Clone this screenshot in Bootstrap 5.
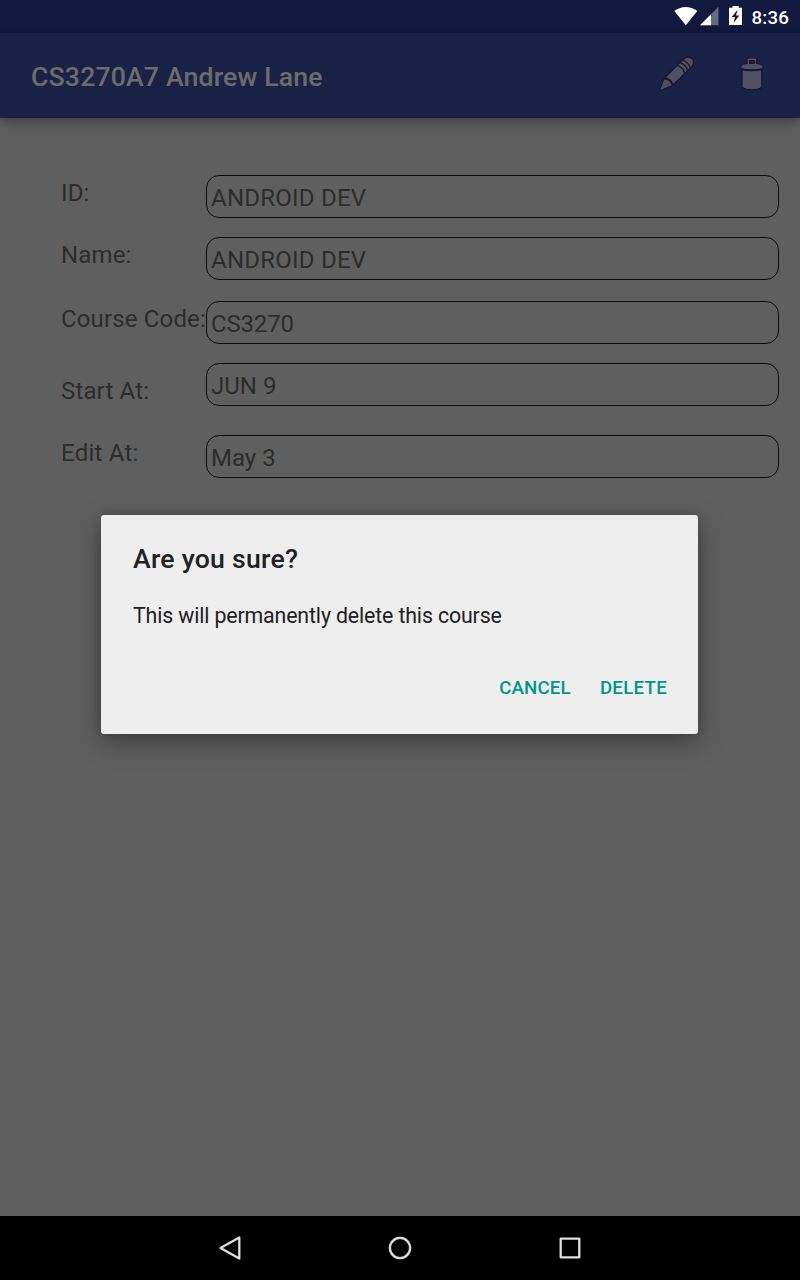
<!DOCTYPE html>
<html lang="en">
<head>
<meta charset="utf-8">
<meta name="viewport" content="width=device-width, initial-scale=1">
<title>CS3270A7 Andrew Lane</title>
<link rel="stylesheet" href="https://cdn.jsdelivr.net/npm/bootstrap@5.3.0/dist/css/bootstrap.min.css">
<style>
body{font-family:Roboto,sans-serif;background:#5f5f5f;color:#2c2c2c;width:800px;height:1280px;overflow:hidden}
.status-bar{height:33px;background:#13193f;color:#fff;padding-right:11px}
.clock{font-size:18.67px;font-weight:500;line-height:22px;letter-spacing:.2px;margin:2px 0 0 8px}
.app-bar{height:85px;background:#1a2147;box-shadow:0 3px 12px rgba(0,0,0,.38);padding:0 32px 0 31px}
.app-title{font-size:26.67px;font-weight:500;line-height:32px;letter-spacing:.15px;color:#6c6c6c;margin-top:2px}
.app-actions{margin-bottom:1px}
.details{padding:57px 21px 0 61px}
.line{height:62px;font-size:24px;line-height:28px}
.line-label{width:145px;padding-top:4px;white-space:nowrap;letter-spacing:.15px}
.line-label.low{padding-top:14px}
.line-value{height:43px;border:1px solid #0c0c0c;border-radius:13px;padding:8px 4px 0}
.wide{letter-spacing:.24px}
.tight{letter-spacing:-.18px}
.gap-code{margin-top:2px}
.gap-edit{margin-top:10px}
.confirm{left:101px;top:515px;width:597px;height:219px;background:#eee;color:#212121;border-radius:3px;padding:28px 20px 0 32px;box-shadow:0 8px 26px rgba(0,0,0,.36),0 0 7px rgba(0,0,0,.14)}
.confirm-title{font-size:26.67px;font-weight:500;line-height:32px;letter-spacing:.23px}
.confirm-text{font-size:21.33px;line-height:26px;letter-spacing:-.14px;margin-top:28px}
.actions{gap:29.3px;margin:47px 11px 0 0}
.flat{font-size:18.67px;font-weight:500;line-height:24px;letter-spacing:.14px;color:#009688;background:none;border:0;padding:0}
.flat:last-child{letter-spacing:.28px}
.nav-keys{height:64px;background:#000;padding:0 214px}
</style>
</head>
<body class="d-flex flex-column m-0">
<header class="status-bar d-flex align-items-center justify-content-end flex-shrink-0">
  <svg width="70" height="33" viewBox="673 0 70 33" fill="#fff" aria-hidden="true">
    <path d="M674.3 11Q685.8 2.8 697.3 11L685.8 25.2Z"/>
    <path fill-opacity=".35" d="M718.5 6.8V25.2H700Z"/>
    <path d="M711 14.3V25.2H700Z"/>
    <path fill-rule="evenodd" d="M732.5 7.8V6H738.7V7.8H742V25H729V7.8ZM737.6 9.8L731.7 17H735L733.5 23L739.3 15.4H736Z"/>
  </svg>
  <span class="clock">8:36</span>
</header>
<nav class="app-bar d-flex align-items-center justify-content-between flex-shrink-0">
  <div class="app-title">CS3270A7 Andrew Lane</div>
  <svg class="app-actions" width="112" height="42" viewBox="656 54 112 42" fill="#4d5063" stroke="#14162f" stroke-width="1.2" stroke-linejoin="round" aria-hidden="true">
    <path d="M659.2 91L664 78.6L682.6 59.8L686 57.4Q691.2 56.2 693.3 60.4Q694.3 63.8 692.2 66.2L672.8 85.2Z"/>
    <path fill="none" stroke-width="1.9" d="M664.6 78.5Q671.5 79.5 672.3 84.9"/>
    <path fill="none" stroke-width="1.3" d="M677.2 65.4Q683.5 67.5 684.7 73.7M680 62.7Q686.3 65 687.6 70.8M682.8 60Q688.8 62.7 690.3 68.1"/>
    <path d="M742 69.5H761.8V87.2Q759 89.9 751.9 89.9Q744.6 89.9 742 87.2Z"/>
    <path d="M747 63.4V58H756.7V63.4Q763.2 64 763.2 67.2Q763.2 70 751.9 70Q740.6 70 740.6 67.2Q740.6 64 747 63.4Z"/>
    <path fill="#1a2147" stroke-width="1" d="M749.4 60.6H754.4V63.4H749.4Z"/>
    <path fill="none" stroke-width="1.8" d="M741.8 69.4Q751.8 71.4 761.8 69.4"/>
  </svg>
</nav>
<main class="details flex-grow-1">
  <div class="line d-flex"><div class="line-label">ID:</div><div class="line-value wide flex-grow-1">ANDROID DEV</div></div>
  <div class="line d-flex"><div class="line-label">Name:</div><div class="line-value wide flex-grow-1">ANDROID DEV</div></div>
  <div class="line gap-code d-flex"><div class="line-label">Course Code:</div><div class="line-value tight flex-grow-1">CS3270</div></div>
  <div class="line d-flex"><div class="line-label low">Start At:</div><div class="line-value flex-grow-1">JUN 9</div></div>
  <div class="line gap-edit d-flex"><div class="line-label wide">Edit At:</div><div class="line-value flex-grow-1">May 3</div></div>
</main>
<section class="confirm position-absolute" role="dialog">
  <div class="confirm-title">Are you sure?</div>
  <div class="confirm-text">This will permanently delete this course</div>
  <div class="actions d-flex justify-content-end">
    <button class="flat" type="button">CANCEL</button>
    <button class="flat" type="button">DELETE</button>
  </div>
</section>
<footer class="nav-keys d-flex align-items-center justify-content-between flex-shrink-0">
  <svg width="32" height="32" fill="none" stroke="#dedede" stroke-width="2.3" stroke-linejoin="round"><path d="M25.3 5.5V26.5L6.5 16Z"/></svg>
  <svg width="32" height="32" fill="none" stroke="#dedede" stroke-width="2.3"><circle cx="16" cy="16" r="10.1"/></svg>
  <svg width="32" height="32" fill="none" stroke="#dedede" stroke-width="2.3" stroke-linejoin="round"><path d="M6.7 6.7H25.3V25.3H6.7Z"/></svg>
</footer>
<script src="https://cdn.jsdelivr.net/npm/bootstrap@5.3.0/dist/js/bootstrap.bundle.min.js"></script>
</body>
</html>
